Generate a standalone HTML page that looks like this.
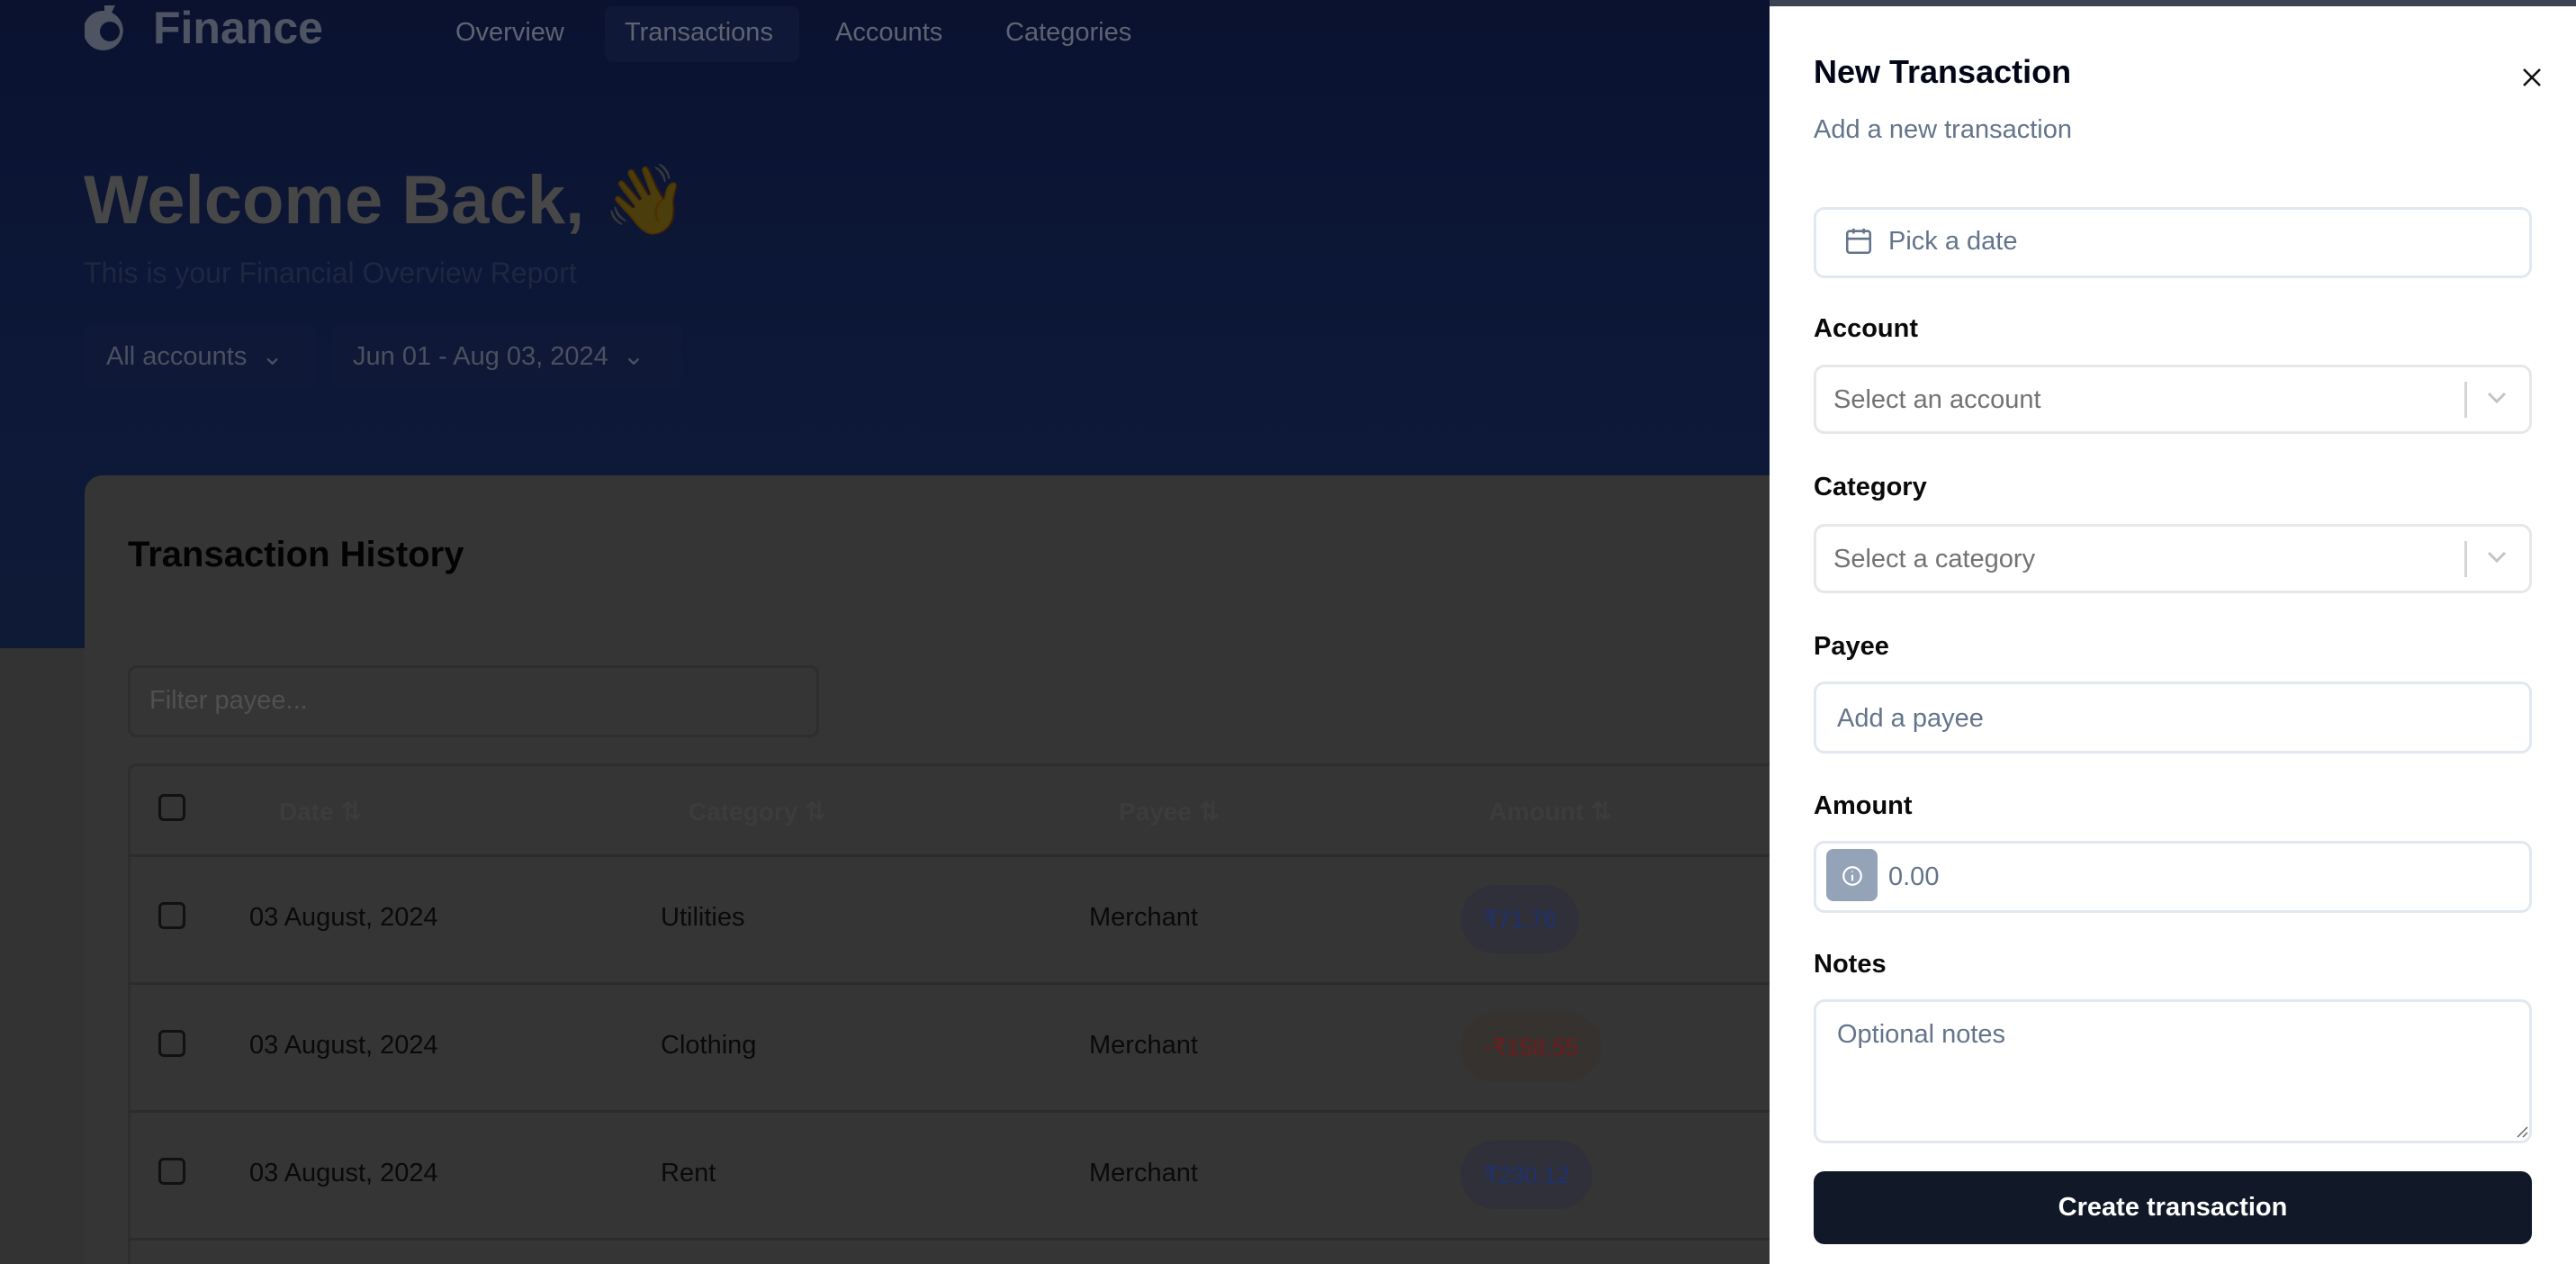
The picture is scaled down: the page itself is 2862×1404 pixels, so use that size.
<!DOCTYPE html>
<html><head><meta charset="utf-8"><style>
*{box-sizing:border-box;margin:0;padding:0}
html{width:2862px;height:1404px;overflow:hidden}
body{width:2862px;height:1404px;overflow:hidden;position:relative;background:#333;font-family:"Liberation Sans",sans-serif}
.a{position:absolute}
.hero{left:0;top:0;width:1966px;height:720px;background:linear-gradient(180deg,#0a1230 0%,#0d1838 60%,#0f1a36 100%)}
.nav{color:#5e6372;font-size:29px;top:20px}
.card{left:94px;top:528px;width:1872px;height:876px;background:#353535;border-radius:20px 0 0 0}
.th{top:885px;font-size:28px;color:#3c3c3c;font-weight:bold}
.td{font-size:29px;color:#0a0a0a}
.cb{width:30px;height:30px;border:3px solid #111;border-radius:6px;left:176px}
.sep{left:142px;width:1824px;height:3px;background:#2c2c2c}
.panel{left:1966px;top:7px;width:896px;height:1397px;background:#fff}
.lbl{left:2015px;font-size:29px;font-weight:bold;color:#0a0a0a}
.inp{left:2015px;width:798px;border:3px solid #e2e8f0;border-radius:12px;background:#fff}
.ph{font-size:29px;color:#64748b}
</style></head><body>
<div class="a" style="left:0;top:0;width:2862px;height:7px;background:#3b4252"></div>
<div class="hero a"></div>
<svg class="a" style="left:94px;top:6px" width="56" height="58" viewBox="0 0 56 58"><path d="M22 6 L22 0 L34 0 L30 8 A22 22 0 1 1 22 6 Z M28 18 A11 11 0 1 0 28 40 A11 11 0 1 0 28 18Z" fill="#4f5463" fill-rule="evenodd"/></svg>
<div class="a" style="left:170px;top:2px;font-size:50px;font-weight:bold;color:#4f5463">Finance</div>
<div class="a" style="left:672px;top:7px;width:216px;height:62px;background:#0f1836;border-radius:8px"></div>
<div class="a nav" style="left:506px">Overview</div>
<div class="a nav" style="left:694px">Transactions</div>
<div class="a nav" style="left:928px">Accounts</div>
<div class="a nav" style="left:1117px">Categories</div>
<div class="a" style="left:93px;top:177px;font-size:76px;font-weight:bold;color:#474747">Welcome Back, <span style="filter:brightness(0.3)">👋</span></div>
<div class="a" style="left:93px;top:285px;font-size:32px;color:#1f2740">This is your Financial Overview Report</div>
<div class="a" style="left:93px;top:360px;width:259px;height:72px;background:#0f1836;border-radius:8px"></div>
<div class="a" style="left:118px;top:378px;font-size:29px;color:#4b5060">All accounts &nbsp;⌄</div>
<div class="a" style="left:369px;top:360px;width:388px;height:72px;background:#0f1836;border-radius:8px"></div>
<div class="a" style="left:392px;top:378px;font-size:29px;color:#4b5060">Jun 01 - Aug 03, 2024 &nbsp;⌄</div>
<div class="card a"></div>
<div class="a" style="left:142px;top:594px;font-size:40px;font-weight:bold;color:#030303">Transaction History</div>
<div class="a" style="left:142px;top:739px;width:768px;height:80px;border:3px solid #2e2e2e;border-radius:10px"></div>
<div class="a" style="left:166px;top:762px;font-size:29px;color:#505050">Filter payee...</div>
<div class="a" style="left:142px;top:848px;width:1824px;height:556px;border:3px solid #2e2e2e;border-bottom:none;border-radius:10px 0 0 0;border-right:none"></div>
<div class="a cb" style="top:882px"></div>
<div class="a th" style="left:310px">Date ⇅</div>
<div class="a th" style="left:765px">Category ⇅</div>
<div class="a th" style="left:1243px">Payee ⇅</div>
<div class="a th" style="left:1654px">Amount ⇅</div>
<div class="a sep" style="top:949px"></div>
<div class="a cb" style="top:1002px"></div>
<div class="a td" style="left:277px;top:1003px">03 August, 2024</div>
<div class="a td" style="left:734px;top:1003px">Utilities</div>
<div class="a td" style="left:1210px;top:1003px">Merchant</div>
<div class="a" style="left:1623px;top:983px;width:131px;height:76px;border-radius:38px;background:#2f3039;color:#1e3270;font-size:26px;line-height:76px;text-align:center">₹71.76</div>
<div class="a sep" style="top:1091px"></div>
<div class="a cb" style="top:1144px"></div>
<div class="a td" style="left:277px;top:1145px">03 August, 2024</div>
<div class="a td" style="left:734px;top:1145px">Clothing</div>
<div class="a td" style="left:1210px;top:1145px">Merchant</div>
<div class="a" style="left:1623px;top:1125px;width:156px;height:76px;border-radius:38px;background:#363230;color:#6e1c1c;font-size:26px;line-height:76px;text-align:center">-₹158.55</div>
<div class="a sep" style="top:1233px"></div>
<div class="a cb" style="top:1286px"></div>
<div class="a td" style="left:277px;top:1287px">03 August, 2024</div>
<div class="a td" style="left:734px;top:1287px">Rent</div>
<div class="a td" style="left:1210px;top:1287px">Merchant</div>
<div class="a" style="left:1623px;top:1267px;width:146px;height:76px;border-radius:38px;background:#2f3039;color:#1e3270;font-size:26px;line-height:76px;text-align:center">₹230.12</div>
<div class="a sep" style="top:1375px"></div>

<div class="panel a"></div>
<div class="a" style="left:2015px;top:59px;font-size:36px;font-weight:bold;color:#020617">New Transaction</div>
<svg class="a" style="left:2801px;top:74px" width="24" height="24" viewBox="0 0 24 24"><path d="M3 3L21 21M21 3L3 21" stroke="#111" stroke-width="2.6"/></svg>
<div class="a" style="left:2015px;top:128px;font-size:29px;color:#64748b">Add a new transaction</div>

<div class="a inp" style="top:230px;height:79px"></div>
<svg class="a" style="left:2048px;top:251px" width="34" height="34" viewBox="0 0 24 24" fill="none" stroke="#64748b" stroke-width="1.8"><rect x="3" y="4" width="18" height="17" rx="2"/><path d="M8 2v4M16 2v4M3 10h18"/></svg>
<div class="a ph" style="left:2098px;top:252px">Pick a date</div>

<div class="a lbl" style="top:349px">Account</div>
<div class="a inp" style="top:405px;height:77px;border-color:#e5e7eb"></div>
<div class="a" style="left:2037px;top:428px;font-size:29px;color:#737373">Select an account</div>
<div class="a" style="left:2738px;top:424px;width:3px;height:40px;background:#d4d4d4"></div>
<svg class="a" style="left:2761px;top:432px" width="26" height="20" viewBox="0 0 26 20"><path d="M4 5l9 9 9-9" stroke="#c4c4c4" stroke-width="3" fill="none"/></svg>

<div class="a lbl" style="top:525px">Category</div>
<div class="a inp" style="top:582px;height:77px;border-color:#e5e7eb"></div>
<div class="a" style="left:2037px;top:605px;font-size:29px;color:#737373">Select a category</div>
<div class="a" style="left:2738px;top:601px;width:3px;height:40px;background:#d4d4d4"></div>
<svg class="a" style="left:2761px;top:609px" width="26" height="20" viewBox="0 0 26 20"><path d="M4 5l9 9 9-9" stroke="#c4c4c4" stroke-width="3" fill="none"/></svg>

<div class="a lbl" style="top:702px">Payee</div>
<div class="a inp" style="top:757px;height:80px"></div>
<div class="a ph" style="left:2041px;top:782px">Add a payee</div>

<div class="a lbl" style="top:879px">Amount</div>
<div class="a inp" style="top:934px;height:80px"></div>
<div class="a" style="left:2029px;top:943px;width:57px;height:58px;background:#94a3b8;border-radius:8px"></div>
<svg class="a" style="left:2045px;top:960px" width="26" height="26" viewBox="0 0 24 24" fill="none" stroke="#fff" stroke-width="2"><circle cx="12" cy="12" r="9"/><path d="M12 11v6M12 7v1"/></svg>
<div class="a ph" style="left:2098px;top:958px">0.00</div>

<div class="a lbl" style="top:1055px">Notes</div>
<div class="a inp" style="top:1110px;height:160px"></div>
<div class="a ph" style="left:2041px;top:1133px">Optional notes</div>
<svg class="a" style="left:2795px;top:1250px" width="14" height="14" viewBox="0 0 14 14"><path d="M2 13L13 2M8 13L13 8" stroke="#666" stroke-width="1.5"/></svg>

<div class="a" style="left:2015px;top:1301px;width:798px;height:81px;background:#111827;border-radius:12px;color:#fff;font-size:29px;font-weight:bold;text-align:center;line-height:81px">Create transaction</div>
</body></html>
